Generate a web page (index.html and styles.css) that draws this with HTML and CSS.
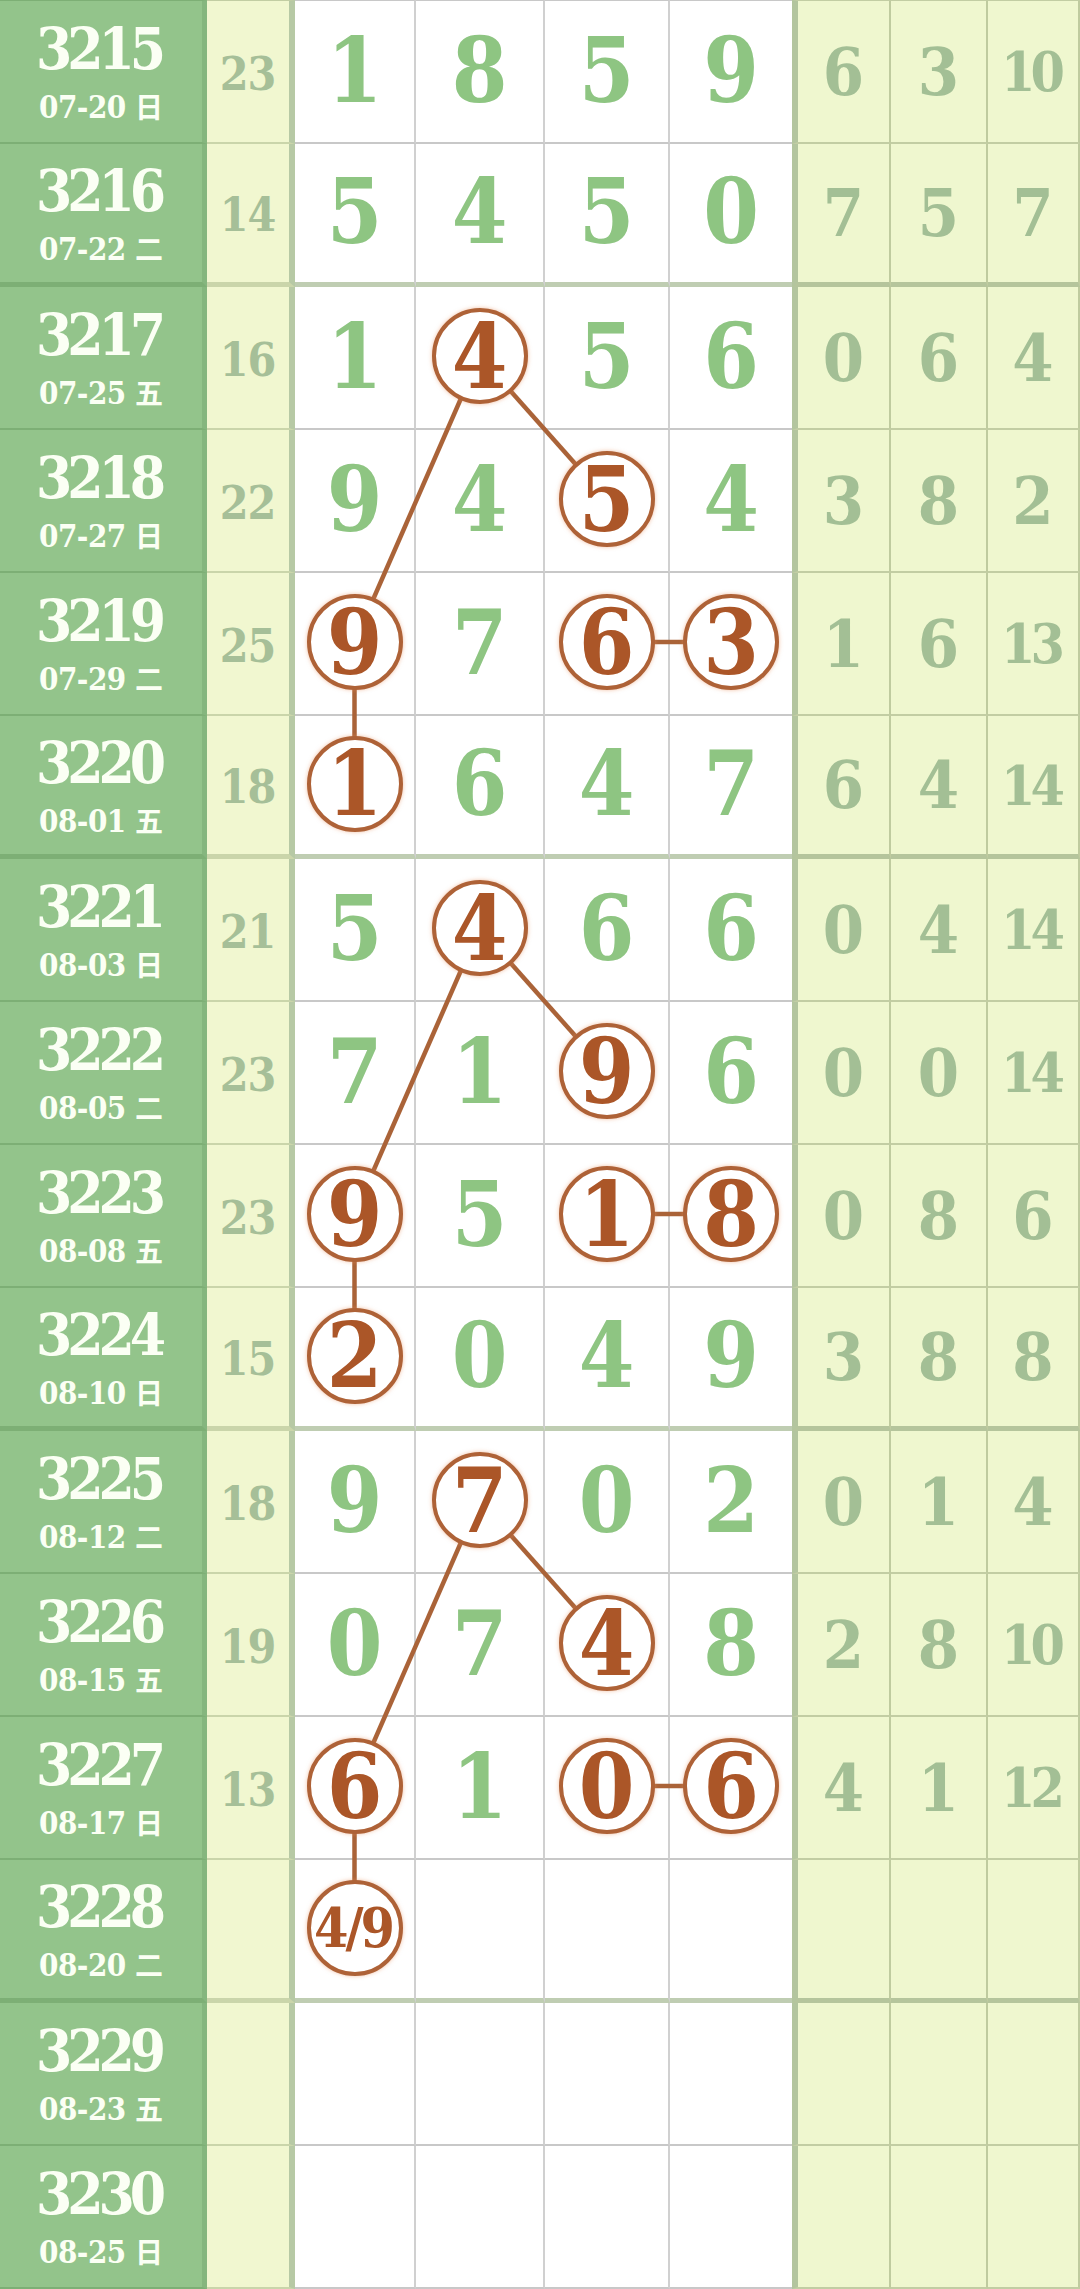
FILE: index.html
```html
<!DOCTYPE html>
<html lang="zh">
<head>
    <meta charset="UTF-8">
    <meta name="viewport" content="width=device-width, initial-scale=1.0">
    <title>走势图</title>
    <link rel="stylesheet" href="styles.css">
</head>
<body>
<div id="chart" class="chart">
    <svg id="links" class="links"></svg>

    <div class="row">
        <div class="issue"><b>3215</b><span class="date">07-20 <i>日</i></span></div>
        <div class="sum">23</div>
        <div class="num">1</div><div class="num">8</div><div class="num">5</div><div class="num">9</div>
        <div class="miss first">6</div><div class="miss">3</div><div class="miss two">10</div>
    </div>
    <div class="row end">
        <div class="issue"><b>3216</b><span class="date">07-22 <i>二</i></span></div>
        <div class="sum">14</div>
        <div class="num">5</div><div class="num">4</div><div class="num">5</div><div class="num">0</div>
        <div class="miss first">7</div><div class="miss">5</div><div class="miss">7</div>
    </div>

    <div class="row">
        <div class="issue"><b>3217</b><span class="date">07-25 <i>五</i></span></div>
        <div class="sum">16</div>
        <div class="num">1</div><div class="num"><span class="ball" id="t1">4</span></div><div class="num">5</div><div class="num">6</div>
        <div class="miss first">0</div><div class="miss">6</div><div class="miss">4</div>
    </div>
    <div class="row">
        <div class="issue"><b>3218</b><span class="date">07-27 <i>日</i></span></div>
        <div class="sum">22</div>
        <div class="num">9</div><div class="num">4</div><div class="num"><span class="ball" id="r1">5</span></div><div class="num">4</div>
        <div class="miss first">3</div><div class="miss">8</div><div class="miss">2</div>
    </div>
    <div class="row">
        <div class="issue"><b>3219</b><span class="date">07-29 <i>二</i></span></div>
        <div class="sum">25</div>
        <div class="num"><span class="ball" id="l1">9</span></div><div class="num">7</div><div class="num"><span class="ball" id="m1">6</span></div><div class="num"><span class="ball" id="n1">3</span></div>
        <div class="miss first">1</div><div class="miss">6</div><div class="miss two">13</div>
    </div>
    <div class="row end">
        <div class="issue"><b>3220</b><span class="date">08-01 <i>五</i></span></div>
        <div class="sum">18</div>
        <div class="num"><span class="ball" id="d1">1</span></div><div class="num">6</div><div class="num">4</div><div class="num">7</div>
        <div class="miss first">6</div><div class="miss">4</div><div class="miss two">14</div>
    </div>

    <div class="row">
        <div class="issue"><b>3221</b><span class="date">08-03 <i>日</i></span></div>
        <div class="sum">21</div>
        <div class="num">5</div><div class="num"><span class="ball" id="t2">4</span></div><div class="num">6</div><div class="num">6</div>
        <div class="miss first">0</div><div class="miss">4</div><div class="miss two">14</div>
    </div>
    <div class="row">
        <div class="issue"><b>3222</b><span class="date">08-05 <i>二</i></span></div>
        <div class="sum">23</div>
        <div class="num">7</div><div class="num">1</div><div class="num"><span class="ball" id="r2">9</span></div><div class="num">6</div>
        <div class="miss first">0</div><div class="miss">0</div><div class="miss two">14</div>
    </div>
    <div class="row">
        <div class="issue"><b>3223</b><span class="date">08-08 <i>五</i></span></div>
        <div class="sum">23</div>
        <div class="num"><span class="ball" id="l2">9</span></div><div class="num">5</div><div class="num"><span class="ball" id="m2">1</span></div><div class="num"><span class="ball" id="n2">8</span></div>
        <div class="miss first">0</div><div class="miss">8</div><div class="miss">6</div>
    </div>
    <div class="row end">
        <div class="issue"><b>3224</b><span class="date">08-10 <i>日</i></span></div>
        <div class="sum">15</div>
        <div class="num"><span class="ball" id="d2">2</span></div><div class="num">0</div><div class="num">4</div><div class="num">9</div>
        <div class="miss first">3</div><div class="miss">8</div><div class="miss">8</div>
    </div>

    <div class="row">
        <div class="issue"><b>3225</b><span class="date">08-12 <i>二</i></span></div>
        <div class="sum">18</div>
        <div class="num">9</div><div class="num"><span class="ball" id="t3">7</span></div><div class="num">0</div><div class="num">2</div>
        <div class="miss first">0</div><div class="miss">1</div><div class="miss">4</div>
    </div>
    <div class="row">
        <div class="issue"><b>3226</b><span class="date">08-15 <i>五</i></span></div>
        <div class="sum">19</div>
        <div class="num">0</div><div class="num">7</div><div class="num"><span class="ball" id="r3">4</span></div><div class="num">8</div>
        <div class="miss first">2</div><div class="miss">8</div><div class="miss two">10</div>
    </div>
    <div class="row">
        <div class="issue"><b>3227</b><span class="date">08-17 <i>日</i></span></div>
        <div class="sum">13</div>
        <div class="num"><span class="ball" id="l3">6</span></div><div class="num">1</div><div class="num"><span class="ball" id="m3">0</span></div><div class="num"><span class="ball" id="n3">6</span></div>
        <div class="miss first">4</div><div class="miss">1</div><div class="miss two">12</div>
    </div>
    <div class="row end">
        <div class="issue"><b>3228</b><span class="date">08-20 <i>二</i></span></div>
        <div class="sum"></div>
        <div class="num"><span class="ball small" id="d3">4/9</span></div><div class="num"></div><div class="num"></div><div class="num"></div>
        <div class="miss first"></div><div class="miss"></div><div class="miss"></div>
    </div>

    <div class="row">
        <div class="issue"><b>3229</b><span class="date">08-23 <i>五</i></span></div>
        <div class="sum"></div>
        <div class="num"></div><div class="num"></div><div class="num"></div><div class="num"></div>
        <div class="miss first"></div><div class="miss"></div><div class="miss"></div>
    </div>
    <div class="row">
        <div class="issue"><b>3230</b><span class="date">08-25 <i>日</i></span></div>
        <div class="sum"></div>
        <div class="num"></div><div class="num"></div><div class="num"></div><div class="num"></div>
        <div class="miss first"></div><div class="miss"></div><div class="miss"></div>
    </div>
</div>

<script>
    const chart = document.getElementById('chart');
    const svg = document.getElementById('links');

    // every group of four draws the same shape
    const links = [];
    [1, 2, 3].forEach(g => {
        links.push(['t' + g, 'r' + g], ['t' + g, 'l' + g], ['m' + g, 'n' + g], ['l' + g, 'd' + g]);
    });

    function center(id) {
        const r = document.getElementById(id).getBoundingClientRect();
        const c = chart.getBoundingClientRect();
        return [r.left + r.width / 2 - c.left, r.top + r.height / 2 - c.top];
    }

    links.forEach(([a, b]) => {
        const p = center(a);
        const q = center(b);
        const line = document.createElementNS('http://www.w3.org/2000/svg', 'line');
        line.setAttribute('x1', p[0]);
        line.setAttribute('y1', p[1]);
        line.setAttribute('x2', q[0]);
        line.setAttribute('y2', q[1]);
        svg.appendChild(line);
    });
</script>
</body>
</html>
```

FILE: styles.css
```css
* {
    box-sizing: border-box;
}

body {
    margin: 0;
    background-color: #ffffff;
    font-family: "DejaVu Serif Condensed", "DejaVu Serif", serif;
    font-stretch: condensed;
    overflow: hidden;
}

.chart {
    position: relative;
    width: 1080px;
}

.links {
    position: absolute;
    top: 0;
    left: 0;
    width: 100%;
    height: 100%;
    z-index: 1;
    pointer-events: none;
}

.links line {
    stroke: #aa6338;
    stroke-width: 4.5;
}

.row {
    display: grid;
    grid-template-columns: 207px 88px 121px 129px 125px 122px 99px 97px 92px;
    height: 143px;
}

/* the row cut off above leaves its bottom line showing */
.row:first-of-type {
    height: 144px;
}

.row:first-of-type > div {
    border-top: 1px solid #c8c8c8;
}

.row:first-of-type > .issue {
    border-top-color: #7daf75;
}

.row > div {
    display: flex;
    align-items: center;
    justify-content: center;
    font-weight: bold;
    border-bottom: 2px solid #c8c8c8;
}

.row.end > div {
    border-bottom-width: 5px;
}

.issue {
    flex-direction: column;
    background-color: #93c48b;
    border-right: 5px solid #85b67e;
    color: #fbfff4;
    border-bottom-color: #7daf75 !important;
}

.issue b {
    font-size: 58px;
    line-height: 62px;
    letter-spacing: -5px;
    padding-right: 5px;
}

.date {
    font-size: 31px;
    line-height: 36px;
    letter-spacing: -0.5px;
    margin-top: 8px;
}

.date i {
    font-style: normal;
    font-family: "Noto Sans CJK SC", sans-serif;
    font-weight: bold;
    font-size: 28px;
    letter-spacing: 0;
}

.sum {
    background-color: #f1f7d0;
    border-right: 6px solid #b7c9a5;
    border-bottom-color: #cad5aa !important;
    color: #a6bf98;
    font-size: 46px;
    letter-spacing: -1px;
    padding: 4px 1px 0 0;
}

.num {
    background-color: #ffffff;
    border-right: 2px solid #d0d0d0;
    color: #8ec582;
    font-size: 89px;
    line-height: 1;
    padding-bottom: 3px;
}

.row.end .num {
    border-bottom-color: #bfcdb2;
}

.num:nth-child(6) {
    border-right: none;
}

.miss {
    background-color: #eff7cf;
    border-right: 2px solid #bfcb9f;
    border-bottom-color: #c2cda3 !important;
    color: #a3bf95;
    font-size: 66px;
    line-height: 1;
}

.row.end .miss {
    border-bottom-color: #b5c59c !important;
}

.row:first-of-type > .sum,
.row:first-of-type > .miss {
    border-top-color: #c2cda3;
}

.miss.first {
    border-left: 6px solid #b3c59e;
}

.miss.two {
    font-size: 55px;
    letter-spacing: -5px;
    padding-right: 5px;
}

.ball {
    position: relative;
    z-index: 2;
    display: flex;
    align-items: center;
    justify-content: center;
    width: 96px;
    height: 96px;
    border: 4px solid #ae6237;
    border-radius: 50%;
    background-color: #ffffff;
    color: #ab5628;
    box-shadow: 0 0 4px rgba(230, 140, 90, 0.55);
}

.ball.small {
    font-size: 55px;
    letter-spacing: -3px;
    padding-right: 3px;
}
```
